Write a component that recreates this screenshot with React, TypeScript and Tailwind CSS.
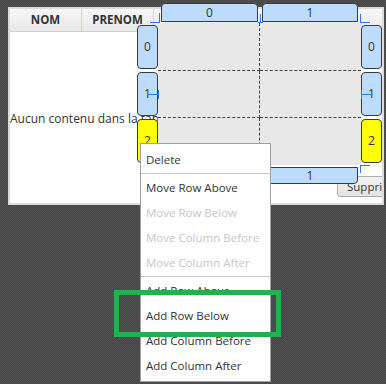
import React from "react";

const MENU: { label: string; disabled?: boolean; sep?: boolean }[] = [
  { label: "Delete" },
  { label: "", sep: true },
  { label: "Move Row Above" },
  { label: "Move Row Below", disabled: true },
  { label: "Move Column Before", disabled: true },
  { label: "Move Column After", disabled: true },
  { label: "", sep: true },
  { label: "Add Row Above" },
  { label: "Add Row Below" },
  { label: "Add Column Before" },
  { label: "Add Column After" },
];

function RowHead({ label, yellow }: { label: string; yellow?: boolean }) {
  return (
    <div
      className={`h-[44px] w-[21px] rounded-[4px] border border-[#3a3a3a] flex items-center justify-center text-[12px] text-[#333] ${
        yellow ? "bg-[#ffff00]" : "bg-[#bddcfc]"
      }`}
    >
      {label}
    </div>
  );
}

// small blue anchor marks drawn over the grid editor
function Mark({ x, y, w, h }: { x: number; y: number; w: number; h: number }) {
  return <span className="absolute bg-[#2a7ae2]" style={{ left: x, top: y, width: w, height: h }} />;
}

export default function App() {
  return (
    <div className="relative w-[386px] h-[384px] overflow-hidden pt-[7px] pl-[8px] bg-[#4a4a4a] bg-[repeating-conic-gradient(#454545_0%_25%,#525252_0%_50%)] bg-[length:2px_2px] font-['Open_Sans',sans-serif]">
      {/* window with the empty table */}
      <div className="w-[376px] h-[198px] border-2 border-[#dcdcdc] bg-white overflow-hidden flex flex-col">
        <div className="h-[23px] shrink-0 flex border-b border-[#cfcfcf] bg-gradient-to-b from-[#f7f7f7] to-[#e8e8e8]">
          <div className="w-[72px] border-r border-[#d4d4d4] flex items-center justify-center text-[11.5px] font-bold text-[#333]">
            NOM
          </div>
          <div className="w-[72px] border-r border-[#d4d4d4] flex items-center justify-center text-[11.5px] font-bold text-[#333]">
            PRENOM
          </div>
          <div className="flex-1" />
        </div>
        <div className="pt-[79px] text-[12px] leading-[16px] text-[#333] whitespace-nowrap">
          Aucun contenu dans la table
        </div>
        <div className="mt-[49px] pl-[327px] flex">
          <div className="shrink-0 w-[60px] h-[21px] rounded-[3px] border border-[#adadad] bg-gradient-to-b from-[#f2f2f2] to-[#e3e3e3] pl-[9px] flex items-center text-[11.5px] text-[#333]">
            Supprimer
          </div>
        </div>
      </div>

      {/* grid editor overlay */}
      <div className="absolute left-[137px] top-[3px] w-[245px] flex flex-col">
        <div className="h-[20px] flex items-start pl-[24px] gap-[4px]">
          <div className="w-[97px] h-[19px] rounded-t-[4px] border border-[#3a3a3a] bg-[#bddcfc] flex items-center justify-center text-[12px] text-[#333]">
            0
          </div>
          <div className="w-[96px] h-[19px] rounded-t-[4px] border border-[#3a3a3a] bg-[#bddcfc] flex items-center justify-center text-[12px] text-[#333]">
            1
          </div>
        </div>
        <div className="flex h-[142px]">
          <div className="flex flex-col gap-[3px] pt-[2px]">
            <RowHead label="0" />
            <RowHead label="1" />
            <RowHead label="2" yellow />
          </div>
          <div className="w-[203px] bg-[#e8e8e8] grid grid-cols-[102px_101px] grid-rows-[48px_47px_47px]">
            <div className="border-r border-b border-dashed border-[#444]" />
            <div className="border-b border-dashed border-[#444]" />
            <div className="border-r border-b border-dashed border-[#444]" />
            <div className="border-b border-dashed border-[#444]" />
            <div className="border-r border-dashed border-[#444]" />
            <div />
          </div>
          <div className="flex flex-col gap-[3px] pt-[2px]">
            <RowHead label="0" />
            <RowHead label="1" />
            <RowHead label="2" yellow />
          </div>
        </div>
        <div className="mt-[2px] flex pl-[24px] gap-[4px]">
          {/* column 0 footer sits under the context menu */}
          <div className="w-[97px] h-[17px] rounded-b-[4px] border border-[#3a3a3a] bg-[#bddcfc]" />
          <div className="w-[96px] h-[17px] rounded-b-[4px] border border-[#3a3a3a] bg-[#bddcfc] flex items-center justify-center text-[12px] text-[#333]">
            1
          </div>
        </div>
      </div>

      <Mark x={150} y={22} w={10} h={1} />
      <Mark x={159} y={13} w={1} h={10} />
      <Mark x={260} y={14} w={1} h={9} />
      <Mark x={258} y={22} w={5} h={1} />
      <Mark x={360} y={14} w={1} h={9} />
      <Mark x={360} y={22} w={10} h={1} />
      <Mark x={148} y={94} w={11} h={1} />
      <Mark x={158} y={90} w={1} h={9} />
      <Mark x={361} y={94} w={11} h={1} />
      <Mark x={361} y={90} w={1} h={9} />
      <Mark x={360} y={165} w={10} h={1} />
      <Mark x={360} y={165} w={1} h={8} />

      {/* context menu */}
      <div className="absolute left-[140px] top-[143px] w-[131px] border border-[#a0a0a0] bg-white py-[3px] text-[11.5px]">
        {MENU.map((m, i) =>
          m.sep ? (
            <div key={i} className="h-[3px] flex items-center">
              <div className="h-px w-full bg-[#c8c8c8]" />
            </div>
          ) : (
            <div
              key={i}
              className={`h-[25px] pl-[5px] flex items-center whitespace-nowrap ${
                m.disabled ? "text-[#c6c6c6]" : "text-[#333]"
              }`}
            >
              {m.label}
            </div>
          )
        )}
      </div>

      {/* highlight box */}
      <div className="absolute left-[114px] top-[290px] w-[167px] h-[47px] border-[5px] border-[#22b14c]" />
    </div>
  );
}
